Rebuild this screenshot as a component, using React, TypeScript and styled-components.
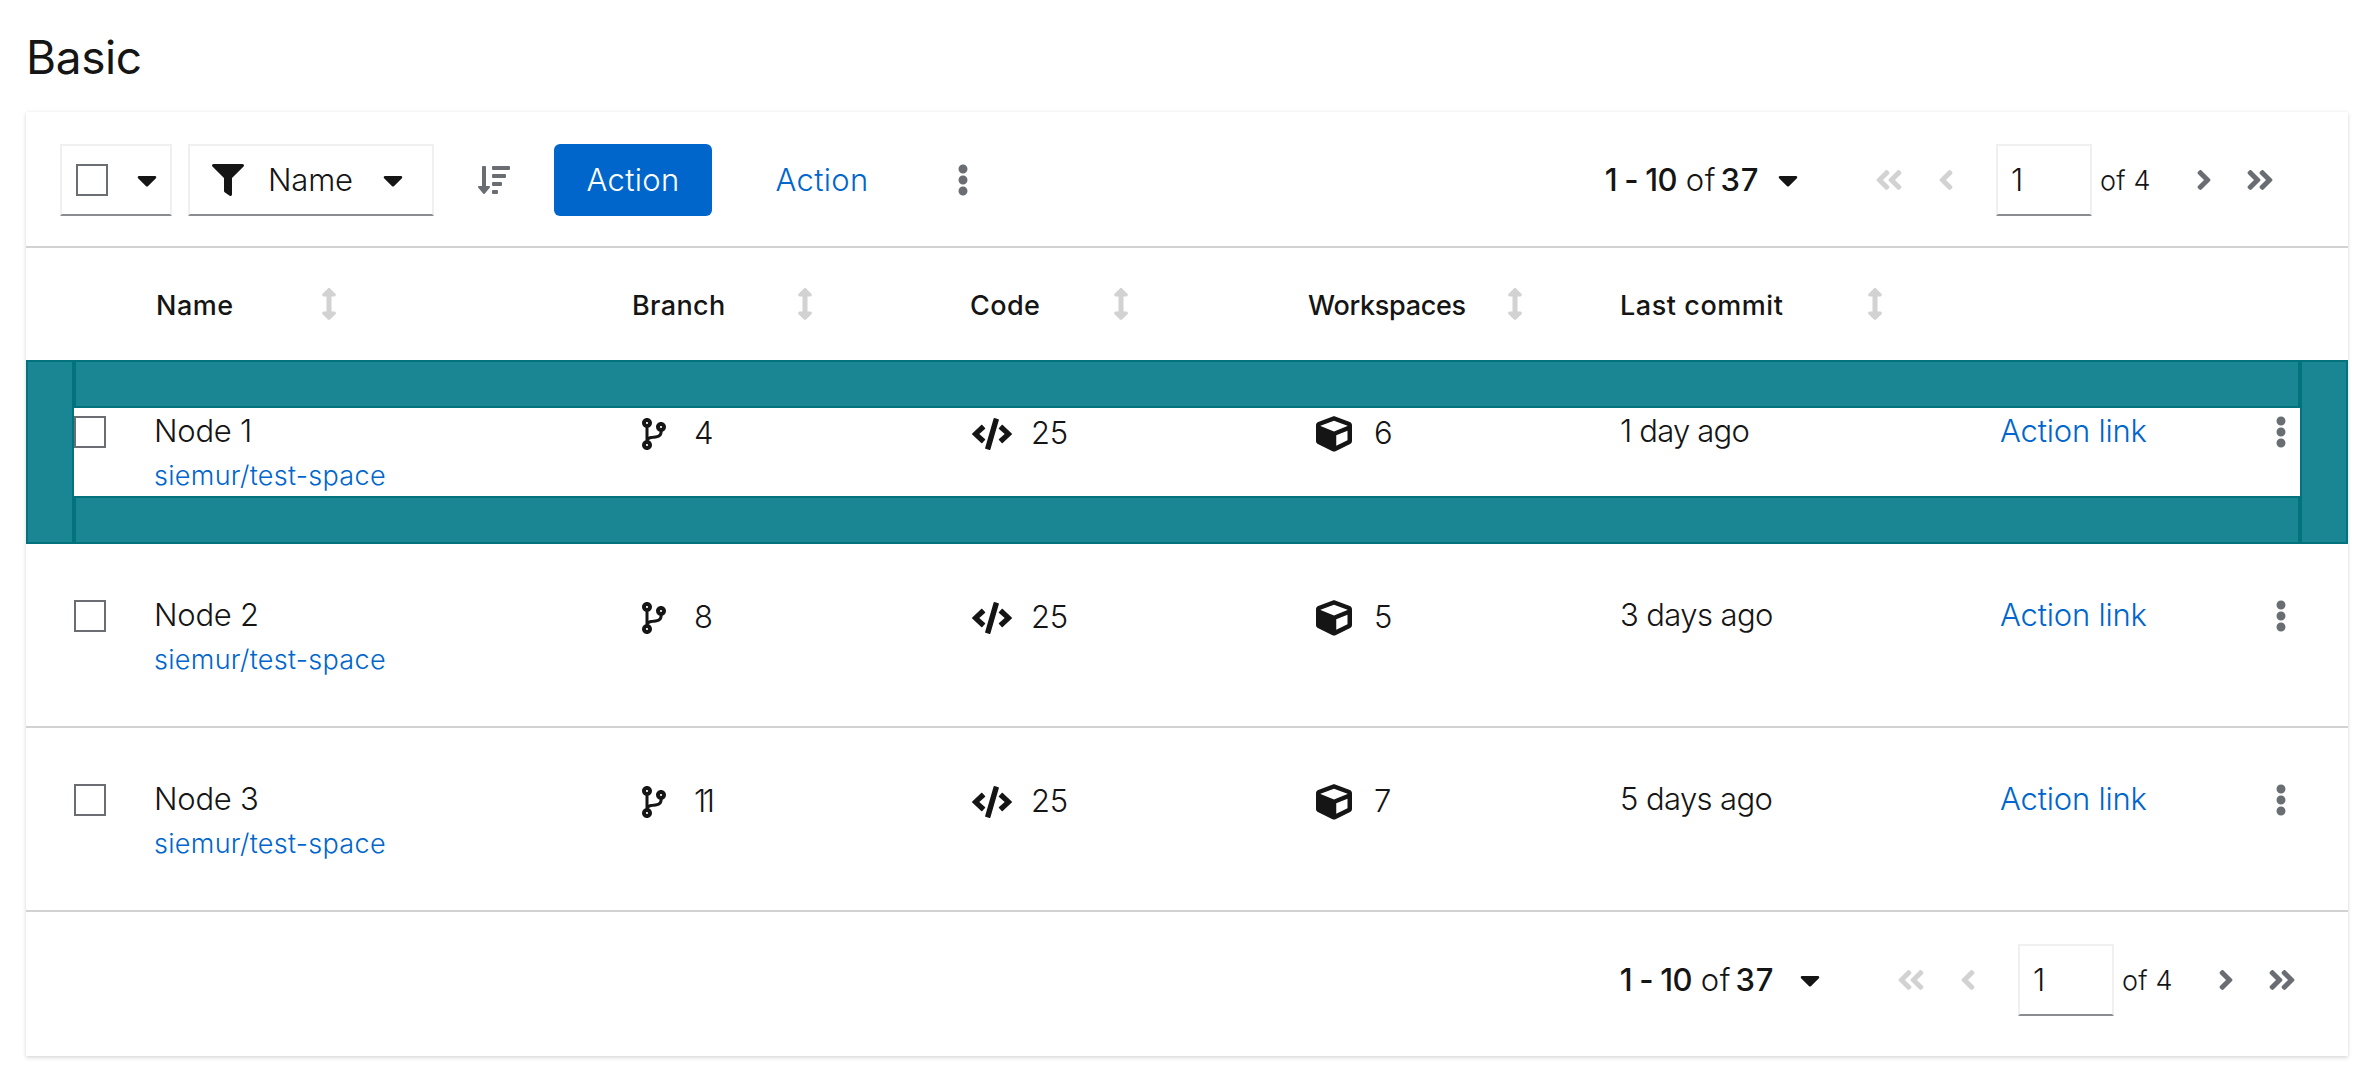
import React from "react";
import styled, { createGlobalStyle, css } from "styled-components";
import {
  FaAngleDoubleLeft,
  FaAngleDoubleRight,
  FaAngleLeft,
  FaAngleRight,
  FaArrowsAltV,
  FaCaretDown,
  FaCode,
  FaCodeBranch,
  FaCube,
  FaEllipsisV,
  FaFilter,
  FaSortAmountDown,
} from "react-icons/fa";

const color = {
  text: "#151515",
  muted: "#6a6e73",
  disabled: "#d2d2d2",
  line: "#d2d2d2",
  edge: "#f0f0f0",
  underline: "#8a8d90",
  blue: "#0066cc",
  teal: "#1a8693",
  tealLine: "#03727c",
};

const GlobalStyle = createGlobalStyle`
  *, *::before, *::after { box-sizing: border-box; }
  body {
    margin: 0;
    background: #fff;
    color: ${color.text};
    font-family: Inter, "Open Sans", sans-serif;
    font-size: 31px;
    font-weight: 300;
  }
  button { font: inherit; color: inherit; background: none; border: 0; padding: 0; margin: 0; }
  a { color: ${color.blue}; text-decoration: none; }
`;

const Page = styled.main`
  padding: 35px 32px 28px 26px;
`;

const Title = styled.h2`
  margin: 0 0 33px;
  font-size: 46px;
  font-weight: 400;
  line-height: 44px;
  letter-spacing: -0.4px;
`;

const Card = styled.section`
  background: #fff;
  box-shadow: 0 2px 4px rgba(3, 3, 3, 0.12), 0 0 4px rgba(3, 3, 3, 0.06);
`;

const Icon = styled.span<{ $w: number; $h?: number; $tone?: string }>`
  display: inline-flex;
  flex: none;
  color: ${(p) => p.$tone ?? color.text};
  svg {
    display: block;
    width: ${(p) => p.$w}px;
    height: ${(p) => p.$h ?? 32}px;
  }
`;

const Text = styled.span<{ $track?: number; $w?: number; $bold?: boolean; $rise?: number }>`
  flex: none;
  white-space: pre;
  letter-spacing: ${(p) => p.$track ?? 0}px;
  ${(p) => p.$w && css`width: ${p.$w}px;`}
  ${(p) => p.$bold && css`font-weight: 500;`}
  ${(p) => p.$rise && css`padding-bottom: ${p.$rise}px;`}
`;

/* Toolbar */

const Toolbar = styled.div`
  display: flex;
  align-items: center;
  gap: 16px;
  height: 136px;
  padding: 32px 60px 30px 34px;
  border-bottom: 2px solid ${color.line};
`;

const outlined = css`
  height: 72px;
  border: 2px solid ${color.edge};
  border-bottom-color: ${color.underline};
`;

const SelectToggle = styled.button`
  ${outlined}
  display: flex;
  align-items: center;
  justify-content: space-between;
  width: 112px;
  padding: 0 13px 0 14px;
`;

const FilterToggle = styled.button`
  ${outlined}
  display: flex;
  align-items: center;
  width: 246px;
  padding-left: 22px;
`;

const FilterLabel = styled(Text)`
  width: 115px;
  margin-left: 24px;
  text-align: left;
`;

const CheckBox = styled.span`
  display: block;
  flex: none;
  width: 32px;
  height: 32px;
  border: 2px solid ${color.muted};
  background: #fff;
`;

const Button = styled.button<{ $w: number; $kind?: "primary" | "link" }>`
  display: flex;
  align-items: center;
  justify-content: center;
  flex: none;
  width: ${(p) => p.$w}px;
  height: 72px;
  border-radius: 6px;
  ${(p) => p.$kind === "primary" && css`background: ${color.blue}; color: #fff;`}
  ${(p) => p.$kind === "link" && css`color: ${color.blue};`}
`;

/* Pagination */

const PagerRoot = styled.nav`
  display: flex;
  align-items: center;
  height: 72px;
  margin-left: auto;
`;

const Range = styled.button<{ $gap: number }>`
  display: flex;
  align-items: center;
  gap: ${(p) => p.$gap}px;
  margin-right: 62px;
`;

const RangeText = styled.span`
  display: flex;
  flex: none;
  width: 160px;
  padding-bottom: 2px;
`;

const PageInput = styled.input`
  ${outlined}
  width: 96px;
  margin: 0 8px 0 22px;
  padding: 0 0 2px 13px;
  border-radius: 0;
  background: #fff;
  color: ${color.text};
  font: inherit;
  outline: none;
`;

const PageCount = styled.span`
  width: 76px;
  font-size: 27px;
  letter-spacing: 0.2px;
`;

const Footer = styled.footer`
  display: flex;
  height: 144px;
  padding: 32px 38px 40px;
`;

function Pager({ caretGap }: { caretGap: number }) {
  return (
    <PagerRoot>
      <Range $gap={caretGap}>
        <RangeText>
          <Text $bold $track={-0.8} $w={81.5}>1 - 10</Text>
          <Text $track={0.6} $w={39}>of</Text>
          <Text $bold $track={0.8}>37</Text>
        </RangeText>
        <Icon $w={20}><FaCaretDown /></Icon>
      </Range>
      <Button $w={58} aria-label="First page"><Icon $w={28} $tone={color.disabled}><FaAngleDoubleLeft /></Icon></Button>
      <Button $w={56} aria-label="Previous page"><Icon $w={16} $tone={color.disabled}><FaAngleLeft /></Icon></Button>
      <PageInput defaultValue="1" aria-label="Current page" />
      <PageCount>of 4</PageCount>
      <Button $w={56} aria-label="Next page"><Icon $w={16} $tone={color.muted}><FaAngleRight /></Icon></Button>
      <Button $w={56} aria-label="Last page"><Icon $w={28} $tone={color.muted}><FaAngleDoubleRight /></Icon></Button>
    </PagerRoot>
  );
}

/* Table */

const columns = css`
  display: grid;
  grid-template-columns: 80px 478px 338px 338px 312px 380px 1fr;
`;

const HeadRow = styled.div`
  ${columns}
  align-items: center;
  height: 112px;
  padding: 0 48px;
`;

const HeadCell = styled.div<{ $indent?: number }>`
  display: flex;
  align-items: center;
  padding-left: ${(p) => p.$indent ?? 0}px;
  font-size: 27px;
  font-weight: 500;
`;

const HeadLabel = styled(Text)`
  padding-top: 2px;
`;

const RowContent = styled.div`
  ${columns}
  grid-area: content;
  height: 88px;
`;

const Row = styled.div`
  display: grid;
  grid-template: "left top right" 48px "left content right" 88px "left bottom right" 1fr / 48px 1fr 48px;
  height: 184px;
  border-bottom: 2px solid ${color.line};
`;

const HighlightedRow = styled(Row)`
  border-bottom: 0;
`;

const Pad = styled.div<{ $side: "left" | "top" | "right" | "bottom" }>`
  grid-area: ${(p) => p.$side};
  background: ${color.teal};
  border: 2px solid ${color.tealLine};
`;

const SelectCell = styled.div`
  padding-top: 8px;
`;

const NameCell = styled.div`
  display: flex;
  flex-direction: column;
  line-height: 45px;
`;

const RepoLink = styled.a`
  height: 43px;
  font-size: 27px;
  line-height: 46px;
  letter-spacing: 0.3px;
`;

const CountCell = styled.div<{ $indent: number; $gap: number }>`
  display: flex;
  align-items: center;
  gap: ${(p) => p.$gap}px;
  height: 52px;
  padding-left: ${(p) => p.$indent}px;
`;

const PlainCell = styled.div`
  line-height: 45px;
`;

const ActionCell = styled.div`
  display: flex;
  justify-content: space-between;
  height: 47px;
  padding-right: 13.5px;
  line-height: 45px;
`;

const Kebab = styled.button`
  display: flex;
  align-items: center;
`;

const heads = [
  { label: "Name", width: 165, track: 0.5, indent: 2 },
  { label: "Branch", width: 165, track: 0.35 },
  { label: "Code", width: 143, track: 0.4 },
  { label: "Workspaces", width: 199, track: -0.3 },
  { label: "Last commit", width: 247, track: 0.55 },
];

const nodes = [
  { name: "Node 1", branches: "4", code: "25", spaces: "6", commit: "1 day ago", track: -0.8 },
  { name: "Node 2", branches: "8", code: "25", spaces: "5", commit: "3 days ago", track: -0.6 },
  { name: "Node 3", branches: "11", code: "25", spaces: "7", commit: "5 days ago", track: -0.6 },
];

type Node = (typeof nodes)[number];

function NodeCells({ node }: { node: Node }) {
  return (
    <RowContent>
      <SelectCell><CheckBox /></SelectCell>
      <NameCell>
        <Text $track={-0.25}>{node.name}</Text>
        <RepoLink>siemur/test-space</RepoLink>
      </NameCell>
      <CountCell $indent={10} $gap={28}>
        <Icon $w={24}><FaCodeBranch /></Icon>
        <Text $rise={3} $track={node.branches === "11" ? -3.5 : 0}>{node.branches}</Text>
      </CountCell>
      <CountCell $indent={2} $gap={19}>
        <Icon $w={40}><FaCode /></Icon>
        <Text $rise={3} $track={-0.4}>{node.code}</Text>
      </CountCell>
      <CountCell $indent={8} $gap={22}>
        <Icon $w={36} $h={36}><FaCube /></Icon>
        <Text $rise={3}>{node.spaces}</Text>
      </CountCell>
      <PlainCell><Text $track={node.track}>{node.commit}</Text></PlainCell>
      <ActionCell>
        <a><Text $track={-0.2}>Action link</Text></a>
        <Kebab aria-label="Row actions"><Icon $w={12} $tone={color.muted}><FaEllipsisV /></Icon></Kebab>
      </ActionCell>
    </RowContent>
  );
}

export default function App() {
  const [first, ...rest] = nodes;
  return (
    <>
      <GlobalStyle />
      <Page>
        <Title>Basic</Title>
        <Card>
          <Toolbar>
            <SelectToggle aria-label="Select all">
              <CheckBox />
              <Icon $w={20}><FaCaretDown /></Icon>
            </SelectToggle>
            <FilterToggle>
              <Icon $w={32}><FaFilter /></Icon>
              <FilterLabel $rise={2} $track={-0.2}>Name</FilterLabel>
              <Icon $w={20}><FaCaretDown /></Icon>
            </FilterToggle>
            <Button $w={88} aria-label="Sort"><Icon $w={32} $tone={color.muted}><FaSortAmountDown /></Icon></Button>
            <Button $w={158} $kind="primary"><Text $rise={2} $track={0.3}>Action</Text></Button>
            <Button $w={188} $kind="link"><Text $rise={2} $track={0.3}>Action</Text></Button>
            <Button $w={62} aria-label="More actions"><Icon $w={12} $tone={color.muted}><FaEllipsisV /></Icon></Button>
            <Pager caretGap={18} />
          </Toolbar>
          <HeadRow>
            <span />
            {heads.map((h) => (
              <HeadCell key={h.label} $indent={h.indent}>
                <HeadLabel $w={h.width} $track={h.track}>{h.label}</HeadLabel>
                <Icon $w={16} $tone={color.disabled}><FaArrowsAltV /></Icon>
              </HeadCell>
            ))}
          </HeadRow>
          <HighlightedRow>
            <Pad $side="left" />
            <Pad $side="top" />
            <NodeCells node={first} />
            <Pad $side="bottom" />
            <Pad $side="right" />
          </HighlightedRow>
          {rest.map((n) => (
            <Row key={n.name}><NodeCells node={n} /></Row>
          ))}
          <Footer><Pager caretGap={25} /></Footer>
        </Card>
      </Page>
    </>
  );
}
